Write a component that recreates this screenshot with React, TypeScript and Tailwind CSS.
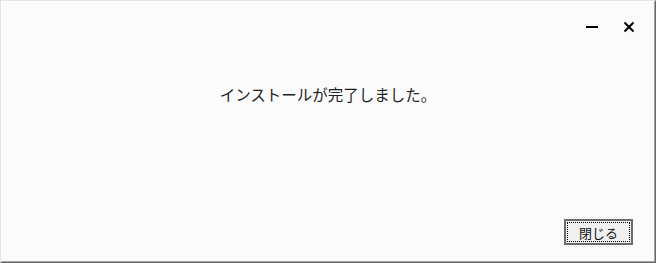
import React from 'react';

const CJK = '"Noto Sans CJK JP", "Noto Sans", sans-serif';

const App: React.FC = () => {
  return (
    <div className="w-[656px] h-[263px] border-t border-l border-t-[#e3e3e3] border-l-[#e3e3e3] border-r border-b border-r-[#696969] border-b-[#696969]">
      <div className="flex flex-col h-full border-t border-l border-t-white border-l-white border-r border-b border-r-[#a0a0a0] border-b-[#a0a0a0] bg-[#fbfbfb]">
        {/* title controls */}
        <div className="flex justify-end items-center h-[50px] pr-[19px] gap-[25px]">
          <svg width="12" height="12" viewBox="0 0 12 12">
            <rect x="0" y="5" width="12" height="2" fill="#000" />
          </svg>
          <svg width="12" height="12" viewBox="0 0 12 12">
            <path d="M1.5 1.5 L10.5 10.5 M10.5 1.5 L1.5 10.5" stroke="#000" strokeWidth="2" />
          </svg>
        </div>

        <div className="flex justify-center mt-[35px]">
          <p className="text-[15.5px] text-[#1e1e1e] leading-none" style={{ fontFamily: CJK }}>
            インストールが完了しました。
          </p>
        </div>

        <div className="flex-1" />

        {/* footer */}
        <div className="flex justify-end pr-[21px] pb-[16px]">
          <button className="w-[69px] h-[26px] border-2 border-[#6b6b6b] bg-[#f0f0f0] p-[1px]">
            <div
              className="h-full w-full border border-dotted border-black flex items-center justify-center text-[13px] text-[#111] leading-none"
              style={{ fontFamily: CJK }}
            >
              閉じる
            </div>
          </button>
        </div>
      </div>
    </div>
  );
};

export default App;
